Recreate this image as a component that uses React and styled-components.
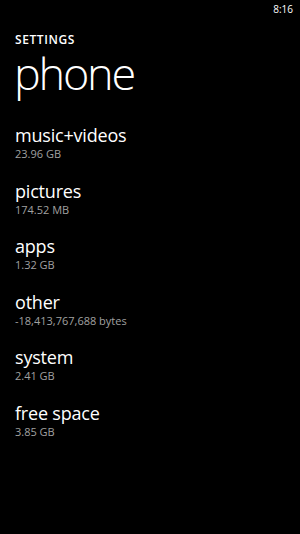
import React from 'react';
import styled, { createGlobalStyle } from 'styled-components';

const GlobalStyle = createGlobalStyle`
    html, body {
        margin: 0;
        padding: 0;
        background: #000;
    }
    body {
        font-family: "Open Sans", "Noto Sans", sans-serif;
        color: #fff;
    }
`;

const storage = [
    { name: 'music+videos', size: '23.96 GB' },
    { name: 'pictures', size: '174.52 MB' },
    { name: 'apps', size: '1.32 GB' },
    { name: 'other', size: '-18,413,767,688 bytes' },
    { name: 'system', size: '2.41 GB' },
    { name: 'free space', size: '3.85 GB' },
];

function App() {
    return (
        <Screen>
            <GlobalStyle />
            <StatusBar>
                <Clock>8:16</Clock>
            </StatusBar>
            <Header>
                <AppTitle>SETTINGS</AppTitle>
                <PageTitle>phone</PageTitle>
            </Header>
            <List>
                {storage.map(item => (
                    <Item key={item.name}>
                        <ItemName>{item.name}</ItemName>
                        <ItemSize>{item.size}</ItemSize>
                    </Item>
                ))}
            </List>
        </Screen>
    );
}

export default App;

const Screen = styled.div`
    width: 300px;
    height: 534px;
    background: #000;
    overflow: hidden;
`;

const StatusBar = styled.div`
    display: flex;
    justify-content: flex-end;
    height: 18px;
    padding: 0 7px;
`;

const Clock = styled.span`
    font-size: 10px;
    line-height: 18px;
    color: #fff;
`;

const Header = styled.div`
    padding: 14px 0 0 15px;
`;

const AppTitle = styled.div`
    font-size: 12px;
    font-weight: 600;
    line-height: 16px;
    letter-spacing: 0.6px;
`;

const PageTitle = styled.div`
    font-family: "Open Sans Light", "Open Sans", "Noto Sans", sans-serif;
    font-size: 45px;
    font-weight: 300;
    line-height: 42px;
    letter-spacing: -2.2px;
    margin: 4px 0 0 -1px;
`;

const List = styled.div`
    display: flex;
    flex-direction: column;
    gap: 17.6px;
    padding: 29px 0 0 15px;
`;

const Item = styled.div`
    display: flex;
    flex-direction: column;
`;

const ItemName = styled.div`
    font-size: 18px;
    font-weight: 400;
    line-height: 24px;
    letter-spacing: -0.2px;
`;

const ItemSize = styled.div`
    font-size: 11px;
    line-height: 14px;
    color: #a0a0a0;
`;
